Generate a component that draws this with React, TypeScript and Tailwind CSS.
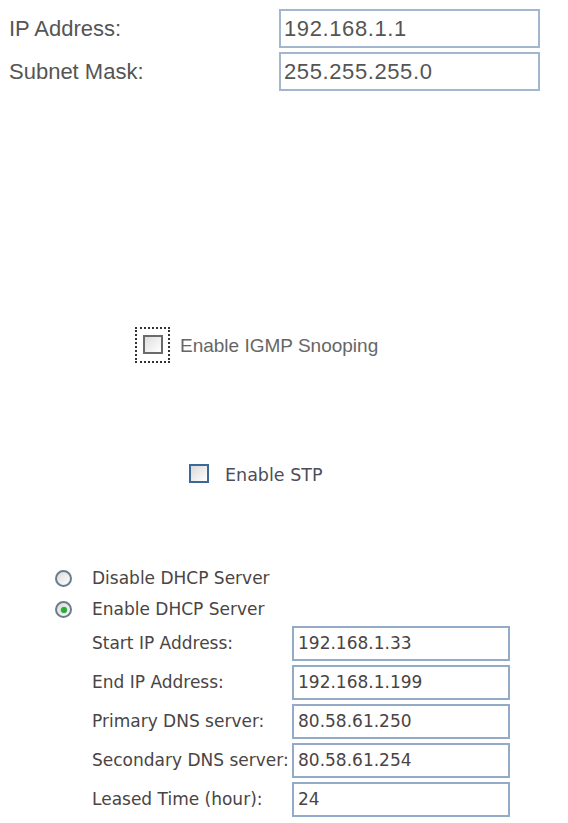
import React from "react";

const topFields = [
  { label: "IP Address:", value: "192.168.1.1" },
  { label: "Subnet Mask:", value: "255.255.255.0" },
];

const dhcpFields = [
  { label: "Start IP Address:", value: "192.168.1.33" },
  { label: "End IP Address:", value: "192.168.1.199" },
  { label: "Primary DNS server:", value: "80.58.61.250" },
  { label: "Secondary DNS server:", value: "80.58.61.254" },
  { label: "Leased Time (hour):", value: "24" },
];

function Radio({ checked }: { checked?: boolean }) {
  return (
    <span className="flex h-[17px] w-[17px] items-center justify-center rounded-full border-2 border-[#6c7c90] bg-gradient-to-br from-[#dcdcd6] to-white">
      {checked && <span className="h-[6px] w-[6px] rounded-full bg-[#2fa83c] shadow-[0_0_2px_#5fd06a]" />}
    </span>
  );
}

export default function App() {
  return (
    <div className="flex min-h-[823px] w-[568px] flex-col bg-white">
      {/* LAN IP */}
      <div className="flex flex-col gap-[4px] pl-[9px] pt-[9px] font-['Liberation_Sans',sans-serif] text-[#555]">
        {topFields.map((f) => (
          <div key={f.label} className="flex h-[39px] items-center">
            <span className="w-[270px] text-[22px]">{f.label}</span>
            <div className="flex h-[39px] w-[261px] items-center border-2 border-[#a2b6cf] pl-[3px] text-[22px] tracking-[0.6px]">
              {f.value}
            </div>
          </div>
        ))}
      </div>

      {/* IGMP */}
      <div className="ml-[135px] mt-[236px] flex h-[35px] items-center">
        <div className="flex h-[36px] w-[35px] items-center justify-center border-2 border-dotted border-[#333]">
          <span className="h-[19px] w-[20px] shrink-0 border-2 border-[#6a6a6a] bg-gradient-to-br from-[#dedede] to-white" />
        </div>
        <span className="ml-[10px] mt-[3px] font-['Liberation_Sans',sans-serif] text-[19px] text-[#666]">Enable IGMP Snooping</span>
      </div>

      {/* STP */}
      <div className="ml-[189px] mt-[101px] flex h-[20px] items-center">
        <span className="h-[19px] w-[20px] shrink-0 border-2 border-[#3d6797] bg-gradient-to-br from-[#d9d9d9] to-white" />
        <span className="ml-[16px] mt-[4px] font-['DejaVu_Sans',sans-serif] text-[17.5px] text-[#4d4d5a]">Enable STP</span>
      </div>

      {/* DHCP */}
      <div className="ml-[55px] mt-[80px] flex flex-col font-['DejaVu_Sans',sans-serif] text-[17px] text-[#4a4444]">
        <div className="flex h-[31px] items-center gap-[20px]">
          <Radio />
          <span className="mt-[1px]">Disable DHCP Server</span>
        </div>
        <div className="flex h-[31px] items-center gap-[20px]">
          <Radio checked />
          <span className="mt-[1px]">Enable DHCP Server</span>
        </div>
      </div>

      <div className="ml-[92px] mt-[1px] grid grid-cols-[200px_218px] gap-y-[4px] font-['DejaVu_Sans',sans-serif] text-[17px] text-[#4a4444]">
        {dhcpFields.map((f) => (
          <React.Fragment key={f.label}>
            <span className="flex h-[35px] items-center whitespace-nowrap">{f.label}</span>
            <div className="flex h-[35px] items-center border-2 border-[#94abc8] pl-[4px]">{f.value}</div>
          </React.Fragment>
        ))}
      </div>
    </div>
  );
}
